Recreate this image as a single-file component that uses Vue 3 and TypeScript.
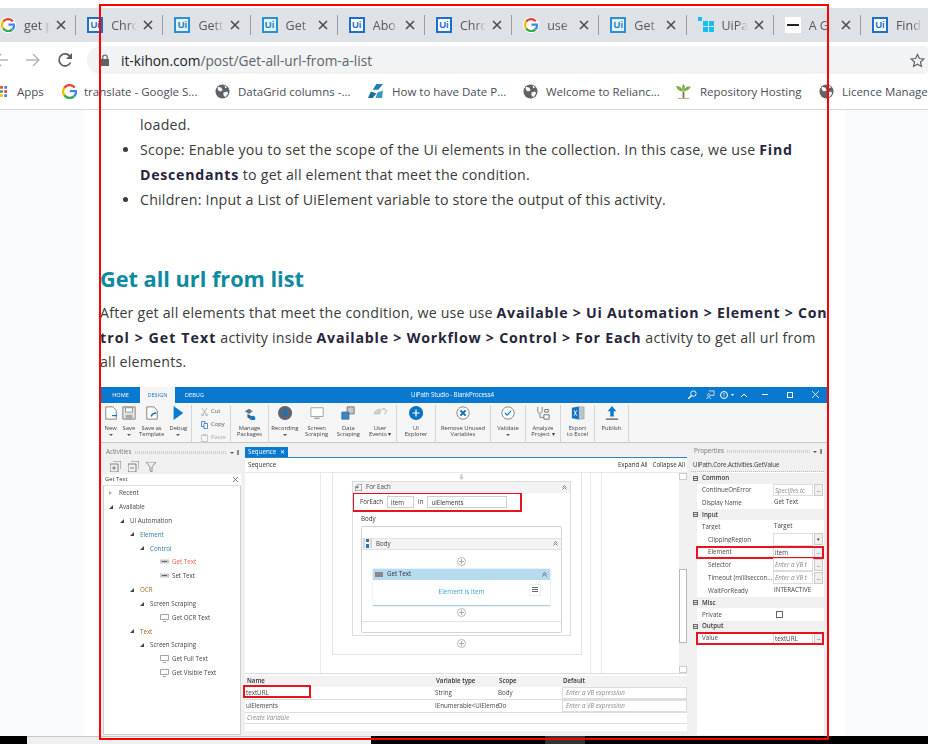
<script setup lang="ts">
interface Shape {
  d: string
  fill?: string
  stroke?: string
  w?: number
}

interface RibbonItem {
  lines: string[]
  icon: string
  caret?: boolean
}

interface PropRow {
  name: string
  value?: string
  kind: 'section' | 'plain' | 'hint' | 'input' | 'combo' | 'flag'
  indent?: boolean
  more?: boolean
}

const icons: Record<string, Shape[]> = {
  newdoc: [
    { d: 'M2 1h8l4 4v10H2z', fill: '#fff', stroke: '#777', w: 1 },
    { d: 'M9 11h6', stroke: '#0a7ad1', w: 1.4 }
  ],
  save: [
    { d: 'M1 1h14v14H1z', fill: '#e8e8e8', stroke: '#777', w: 1 },
    { d: 'M4 2h8v5H4z', fill: '#fff', stroke: '#888', w: 1 },
    { d: 'M4 10h8v5H4z', fill: '#aaa' }
  ],
  template: [
    { d: 'M2 1h8l4 4v10H2z', fill: '#fff', stroke: '#777', w: 1 },
    { d: 'M7 12c1-3 3-4 6-4', stroke: '#1a6fb8', w: 1.6 }
  ],
  debug: [{ d: 'M3 0l11 8-11 8z', fill: '#0a7ad1' }],
  manage: [
    { d: 'M2 6l5-3 4 3-4 3z', fill: '#5f7486' },
    { d: 'M5 9l4 2v4l-4-2z', fill: '#44586a' },
    { d: 'M11 11a3 3 0 1 0 .1 0', fill: '#0a7ad1' }
  ],
  record: [
    { d: 'M8 0a8 8 0 1 0 .1 0z', fill: '#5c6670' },
    { d: 'M8 5a3 3 0 1 0 .1 0z', fill: '#1672c8' }
  ],
  screen: [
    { d: 'M1 2h14v10H1z', fill: '#fff', stroke: '#9a9a9a', w: 1 },
    { d: 'M5 14h6', stroke: '#888', w: 1.2 }
  ],
  data: [
    { d: 'M7 1h8v8H7z', fill: '#c7c7c7', stroke: '#6f6f6f', w: 1 },
    { d: 'M1 7h8v8H1z', fill: '#3f85c4', stroke: '#2a6ca8', w: 1 }
  ],
  events: [
    { d: 'M1 9c1-4 5-6 8-5l-1 5z', fill: '#d0d0d0', stroke: '#bbb', w: 0.8 },
    { d: 'M10 4a3 3 0 1 1 3 5', stroke: '#aaa', w: 1.1 }
  ],
  explorer: [
    { d: 'M8 0a8 8 0 1 0 .1 0z', fill: '#0a74c4' },
    { d: 'M4 8h8M8 4v8', stroke: '#fff', w: 1.4 }
  ],
  remove: [
    { d: 'M8 1a7 7 0 1 0 .1 0z', fill: '#fff', stroke: '#777', w: 1 },
    { d: 'M5 5l6 6M11 5l-6 6', stroke: '#0a74c4', w: 2.4 }
  ],
  validate: [
    { d: 'M8 1a7 7 0 1 0 .1 0z', fill: '#fff', stroke: '#777', w: 1 },
    { d: 'M4.5 8l2.5 2.5 4.5-5', stroke: '#0a7ad1', w: 1.3 }
  ],
  analyze: [
    { d: 'M2 1v5c0 3 5 3 5 0V1M4.5 9v4h4', stroke: '#777', w: 1 },
    { d: 'M10 4h4v3h-4zM9 10h6v5H9z', fill: '#fff', stroke: '#666', w: 1 }
  ],
  excel: [
    { d: 'M8 1h7v14H8z', fill: '#b9c4cc', stroke: '#8a97a0', w: 0.6 },
    { d: 'M1 2l8-1.500v15L1 14z', fill: '#1173c4' },
    { d: 'M3.500 5l3 6M6.500 5l-3 6', stroke: '#fff', w: 1 }
  ],
  publish: [
    { d: 'M8 0l5 6h-3v6H6V6H3z', fill: '#0a7ad1' },
    { d: 'M1 15h14', stroke: '#555', w: 1.4 }
  ]
}

const tabs = [
  { icon: 'g', label: 'get p' },
  { icon: 'ui', label: 'Chro' },
  { icon: 'ui-light', label: 'Gett' },
  { icon: 'ui-light', label: 'Get' },
  { icon: 'ui', label: 'Abo' },
  { icon: 'ui', label: 'Chro' },
  { icon: 'g', label: 'use' },
  { icon: 'ui-light', label: 'Get' },
  { icon: 'squares', label: 'UiPa' },
  { icon: 'bar', label: 'A G' },
  { icon: 'ui', label: 'Find' }
]

const bookmarks = [
  { icon: 'grid', label: 'Apps' },
  { icon: 'g', label: 'translate - Google S...' },
  { icon: 'globe', label: 'DataGrid columns -...' },
  { icon: 'wing', label: 'How to have Date P...' },
  { icon: 'globe', label: 'Welcome to Relianc...' },
  { icon: 'tree', label: 'Repository Hosting' },
  { icon: 'globe', label: 'Licence Manage' }
]

const ribbonLeft: RibbonItem[] = [
  { lines: ['New'], icon: 'newdoc', caret: true },
  { lines: ['Save'], icon: 'save', caret: true },
  { lines: ['Save as', 'Template'], icon: 'template' },
  { lines: ['Debug'], icon: 'debug', caret: true }
]

const ribbonGroups: RibbonItem[][] = [
  [{ lines: ['Manage', 'Packages'], icon: 'manage' }],
  [
    { lines: ['Recording'], icon: 'record', caret: true },
    { lines: ['Screen', 'Scraping'], icon: 'screen' },
    { lines: ['Data', 'Scraping'], icon: 'data' },
    { lines: ['User', 'Events ▾'], icon: 'events' }
  ],
  [{ lines: ['UI', 'Explorer'], icon: 'explorer' }],
  [{ lines: ['Remove Unused', 'Variables'], icon: 'remove' }],
  [{ lines: ['Validate'], icon: 'validate', caret: true }],
  [{ lines: ['Analyze', 'Project ▾'], icon: 'analyze' }],
  [{ lines: ['Export', 'to Excel'], icon: 'excel' }],
  [{ lines: ['Publish'], icon: 'publish' }]
]

const tree = [
  { label: 'Recent', level: 0, tone: '', open: false },
  { label: 'Available', level: 0, tone: '', open: true },
  { label: 'UI Automation', level: 1, tone: '', open: true },
  { label: 'Element', level: 2, tone: 'blue', open: true },
  { label: 'Control', level: 3, tone: 'blue', open: true },
  { label: 'Get Text', level: 4, tone: 'hit', icon: 'box' },
  { label: 'Set Text', level: 4, tone: '', icon: 'box' },
  { label: 'OCR', level: 2, tone: 'amber', open: true },
  { label: 'Screen Scraping', level: 3, tone: '', open: true },
  { label: 'Get OCR Text', level: 4, tone: '', icon: 'monitor' },
  { label: 'Text', level: 2, tone: 'amber', open: true },
  { label: 'Screen Scraping', level: 3, tone: '', open: true },
  { label: 'Get Full Text', level: 4, tone: '', icon: 'monitor' },
  { label: 'Get Visible Text', level: 4, tone: '', icon: 'monitor' }
]

const props: PropRow[] = [
  { name: 'Common', kind: 'section' },
  { name: 'ContinueOnError', value: 'Specifies tc', kind: 'hint', more: true },
  { name: 'Display Name', value: 'Get Text', kind: 'plain' },
  { name: 'Input', kind: 'section' },
  { name: 'Target', value: 'Target', kind: 'plain' },
  { name: 'ClippingRegion', kind: 'combo', indent: true },
  { name: 'Element', value: 'item', kind: 'input', indent: true, more: true },
  { name: 'Selector', value: 'Enter a VB t', kind: 'hint', indent: true, more: true },
  { name: 'Timeout (milliseccon...', value: 'Enter a VB t', kind: 'hint', indent: true, more: true },
  { name: 'WaitForReady', value: 'INTERACTIVE', kind: 'plain', indent: true },
  { name: 'Misc', kind: 'section' },
  { name: 'Private', kind: 'flag' },
  { name: 'Output', kind: 'section' },
  { name: 'Value', value: 'textURL', kind: 'input', more: true }
]

const variables = [
  { name: 'textURL', type: 'String', scope: 'Body' },
  { name: 'uiElements', type: 'IEnumerable<UiEleme', scope: 'Do' }
]
</script>

<template>
  <div class="page">
    <div class="tabstrip">
      <div v-for="(tab, i) in tabs" :key="i" class="tab">
        <span v-if="tab.icon === 'ui' || tab.icon === 'ui-light'" class="ui-icon" :class="{ light: tab.icon === 'ui-light' }">Ui</span>
        <span v-else-if="tab.icon === 'g'" class="g-round">
          <svg width="14" height="14" viewBox="0 0 16 16" fill="none">
            <path d="M13.500 3.800A7 7 0 0 0 2.500 4" stroke="#ea4335" stroke-width="2.600" />
            <path d="M2.500 4a7 7 0 0 0 0 8" stroke="#fbbc05" stroke-width="2.600" />
            <path d="M2.500 12a7 7 0 0 0 10.500 1" stroke="#34a853" stroke-width="2.600" />
            <path d="M13 13a7 7 0 0 0 2-5.400H8.500" stroke="#4285f4" stroke-width="2.600" />
          </svg>
        </span>
        <svg v-else-if="tab.icon === 'squares'" class="favicon" viewBox="0 0 16 16">
          <path d="M0 0h4v4H0zM5 4h5v5H5zM11 4h5v5h-5zM5 10h5v5H5zM11 10h5v5h-5z" fill="#12c2ee" />
        </svg>
        <svg v-else class="favicon" viewBox="0 0 16 16">
          <path d="M0 0h16v16H0z" fill="#fff" />
          <path d="M2 7h12v2H2z" fill="#222" />
        </svg>
        <span class="tab-label">{{ tab.label }}</span>
        <svg class="tab-close" width="10" height="10" viewBox="0 0 10 10">
          <path d="M1 1l8 8M9 1l-8 8" stroke="#45484c" stroke-width="1.500" />
        </svg>
      </div>
    </div>

    <div class="toolbar">
      <svg class="nav back" width="14" height="14" viewBox="0 0 14 14" fill="none">
        <path d="M14 7H1M7 1L1 7l6 6" stroke="#b4b6b9" stroke-width="1.500" />
      </svg>
      <svg class="nav forward" width="14" height="14" viewBox="0 0 14 14" fill="none">
        <path d="M0 7h13M7 1l6 6-6 6" stroke="#b4b6b9" stroke-width="1.500" />
      </svg>
      <svg class="nav reload" width="16" height="16" viewBox="0 0 16 16" fill="none">
        <path d="M13.500 10.500A6 6 0 1 1 13 4.500" stroke="#5a5d61" stroke-width="1.700" />
        <path d="M15 1v6H9z" fill="#5a5d61" />
      </svg>
      <div class="omnibox">
        <svg width="10" height="12" viewBox="0 0 10 12">
          <path d="M1 5h8v7H1z" fill="#5f6368" />
          <path d="M2.800 5V3.200a2.200 2.200 0 0 1 4.400 0V5" fill="none" stroke="#5f6368" stroke-width="1.200" />
        </svg>
        <span class="url"><span class="url-host">it-kihon.com</span>/post/Get-all-url-from-a-list</span>
        <svg class="star" width="15" height="15" viewBox="0 0 16 16">
          <path d="M8 1.500l2 4.400 4.800.5-3.600 3.200 1 4.700L8 11.900l-4.200 2.400 1-4.700L1.200 6.400 6 5.900z" fill="none" stroke="#5f6368" stroke-width="1.300" />
        </svg>
      </div>
    </div>

    <div class="bookmarks">
      <div v-for="mark in bookmarks" :key="mark.label" class="bookmark" :class="mark.icon">
        <svg v-if="mark.icon === 'grid'" class="mark-icon" viewBox="0 0 16 16">
          <path d="M0 0h4v4H0z" fill="#ea4335" /><path d="M6 0h4v4H6z" fill="#ea4335" /><path d="M12 0h4v4h-4z" fill="#4285f4" />
          <path d="M0 6h4v4H0z" fill="#fbbc05" /><path d="M6 6h4v4H6z" fill="#34a853" /><path d="M12 6h4v4h-4z" fill="#ea4335" />
          <path d="M0 12h4v4H0z" fill="#fbbc05" /><path d="M6 12h4v4H6z" fill="#fbbc05" /><path d="M12 12h4v4h-4z" fill="#4285f4" />
        </svg>
        <svg v-else-if="mark.icon === 'g'" class="mark-icon" viewBox="0 0 16 16" fill="none">
          <path d="M13.500 3.800A7 7 0 0 0 2.500 4" stroke="#ea4335" stroke-width="2.600" />
          <path d="M2.500 4a7 7 0 0 0 0 8" stroke="#fbbc05" stroke-width="2.600" />
          <path d="M2.500 12a7 7 0 0 0 10.500 1" stroke="#34a853" stroke-width="2.600" />
          <path d="M13 13a7 7 0 0 0 2-5.400H8.500" stroke="#4285f4" stroke-width="2.600" />
        </svg>
        <svg v-else-if="mark.icon === 'globe'" class="mark-icon" viewBox="0 0 16 16">
          <circle cx="8" cy="8" r="7.500" fill="#5f6368" />
          <path d="M3 3l4 1 1 3-3 1-2-2zM9 9l4-1 1 2-3 4-2-2zM10 1.500l3 2-2 1z" fill="#fff" />
        </svg>
        <svg v-else-if="mark.icon === 'wing'" class="mark-icon" viewBox="0 0 16 16">
          <path d="M9 0h7l-5 6H5z" fill="#1f7fb5" />
          <path d="M0 15l3-7 6 2-4 5z" fill="#1a6d9e" />
          <path d="M8 15l2-6 6-2-1 8z" fill="#2f9ccc" />
        </svg>
        <svg v-else class="mark-icon" viewBox="0 0 16 16">
          <path d="M7 8V15h2V8z" fill="#8d7350" />
          <path d="M8 8C4 8 1 6 0 2c4 0 7 2 8 6zM8 8c3 0 6-2 8-5-4-1-7 1-8 5zM8 7C6 5 6 2 8 0c2 2 2 5 0 7z" fill="#7fb048" />
          <path d="M2 15h12v1H2z" fill="#b9a98b" />
        </svg>
        <span>{{ mark.label }}</span>
      </div>
    </div>

    <main class="content">
      <article class="article">
        <ul class="bullets">
          <li class="no-dot">loaded.</li>
          <li>Scope: Enable you to set the scope of the Ui elements in the collection. In this case, we use <b>Find<br />Descendants</b> to get all element that meet the condition.</li>
          <li>Children: Input a List of UiElement variable to store the output of this activity.</li>
        </ul>

        <h2>Get all url from list</h2>
        <p class="intro">
          After get all elements that meet the condition, we use use <b>Available &gt; Ui Automation &gt; Element &gt; Con<br /><span class="wide">trol &gt; Get Text</span></b> activity inside <b class="wider">Available &gt; Workflow &gt; Control &gt; For Each</b> activity to get all url from<br />all elements.
        </p>

        <section class="studio">
          <header class="titlebar">
            <span class="ribbon-tab">HOME</span>
            <span class="ribbon-tab active">DESIGN</span>
            <span class="ribbon-tab">DEBUG</span>
            <span class="app-title">UiPath Studio - BlankProcess4</span>
            <div class="win-icons">
              <svg width="9" height="9" viewBox="0 0 10 10" fill="none"><circle cx="6" cy="4" r="3" stroke="#fff" /><path d="M4 6L0 10" stroke="#fff" stroke-width="1.500" /></svg>
              <svg width="9" height="9" viewBox="0 0 10 10" fill="none"><path d="M3 1h6v5H5M3 4a1.500 1.500 0 1 0 .1 0M1 10c0-3 4-3 4 0" stroke="#fff" stroke-width=".8" /></svg>
              <span class="help">?</span>
              <svg width="3" height="2" viewBox="0 0 6 4"><path d="M0 0h6L3 4z" fill="#fff" /></svg>
              <svg width="6" height="4" viewBox="0 0 6 4" fill="none"><path d="M0 4l3-3 3 3" stroke="#fff" /></svg>
              <span class="win-min"></span>
              <span class="win-max"></span>
              <svg width="7" height="7" viewBox="0 0 7 7" fill="none"><path d="M0 0l7 7M7 0L0 7" stroke="#fff" stroke-width=".8" /></svg>
            </div>
          </header>

          <div class="ribbon">
            <div class="rib-group first">
              <div v-for="item in ribbonLeft" :key="item.lines[0]" class="rib-item">
                <svg class="rib-icon" viewBox="0 0 16 16" fill="none">
                  <path v-for="(s, k) in icons[item.icon]" :key="k" :d="s.d" :fill="s.fill ?? 'none'" :stroke="s.stroke" :stroke-width="s.w" />
                </svg>
                <span v-for="line in item.lines" :key="line">{{ line }}</span>
                <i v-if="item.caret" class="caret"></i>
              </div>
            </div>
            <div class="rib-group clip">
              <span>
                <svg class="clip-icon" viewBox="0 0 7 8" fill="none"><path d="M1 0l4 6M6 0L2 6" stroke="#999" stroke-width=".7" /><circle cx="1.500" cy="7" r="1" stroke="#999" stroke-width=".6" /><circle cx="5.500" cy="7" r="1" stroke="#999" stroke-width=".6" /></svg>
                Cut
              </span>
              <span>
                <svg class="clip-icon" viewBox="0 0 7 8" fill="none"><path d="M.5.500h3.500v5H.5z" stroke="#2a75b8" stroke-width=".8" /><path d="M3 2.500h3.500v5H3z" fill="#fff" stroke="#2a75b8" stroke-width=".8" /></svg>
                Copy
              </span>
              <span class="muted">
                <svg class="clip-icon" viewBox="0 0 7 8" fill="none"><path d="M.5 1h6v6.500h-6zM2.500.500h2v1h-2z" stroke="#b5b5b5" stroke-width=".7" /></svg>
                Paste
              </span>
            </div>
            <div v-for="(group, g) in ribbonGroups" :key="g" class="rib-group">
              <div v-for="item in group" :key="item.lines[0]" class="rib-item">
                <svg class="rib-icon" viewBox="0 0 16 16" fill="none">
                  <path v-for="(s, k) in icons[item.icon]" :key="k" :d="s.d" :fill="s.fill ?? 'none'" :stroke="s.stroke" :stroke-width="s.w" />
                </svg>
                <span v-for="line in item.lines" :key="line">{{ line }}</span>
                <i v-if="item.caret" class="caret"></i>
              </div>
            </div>
          </div>

          <div class="workspace">
            <aside class="activities">
              <div class="pane-title"><span>Activities</span><i class="grip"></i><i class="caret small"></i><i class="pin"></i></div>
              <div class="act-tools">
                <svg width="11" height="11" viewBox="0 0 11 11" fill="none"><path d="M3 0h8v8M0 3h8v8H0zM2 7h4M4 5v4" stroke="#666" stroke-width=".8" /></svg>
                <svg width="11" height="11" viewBox="0 0 11 11" fill="none"><path d="M3 0h8v8M0 3h8v8H0zM2 7h4" stroke="#666" stroke-width=".8" /></svg>
                <svg width="10" height="10" viewBox="0 0 10 10" fill="none"><path d="M0 0h10L6 5v5L4 9V5z" stroke="#777" stroke-width=".8" /></svg>
              </div>
              <div class="act-search">
                <span>Get Text</span>
                <svg width="5" height="5" viewBox="0 0 5 5" fill="none"><path d="M0 0l5 5M5 0L0 5" stroke="#555" stroke-width=".8" /></svg>
              </div>
              <div class="act-tree">
                <div v-for="(row, r) in tree" :key="r" class="tree-row" :class="[`lv${row.level}`, row.tone]">
                  <i v-if="row.icon === undefined" class="arrow" :class="{ closed: !row.open }"></i>
                  <svg v-else-if="row.icon === 'box'" class="leaf" viewBox="0 0 9 7"><path d="M0 1h9v4H0z" fill="#c9c9c9" /><path d="M2 3h5" stroke="#666" /></svg>
                  <svg v-else class="leaf" viewBox="0 0 9 8" fill="none"><path d="M.5.500h8v5h-8zM3 7.500h3" stroke="#8d8d8d" stroke-width=".8" /></svg>
                  <span>{{ row.label }}</span>
                </div>
              </div>
            </aside>

            <div class="center">
              <div class="doc-tabs"><span class="doc-tab">Sequence <i>✕</i></span></div>
              <div class="crumbs">
                <span>Sequence</span>
                <span class="crumb-links"><span>Expand All</span><span>Collapse All</span></span>
              </div>
              <div class="canvas">
                <div class="seq-outer">
                  <svg class="drop" width="5" height="6" viewBox="0 0 5 6"><path d="M1.500 0h2v3H5L2.500 6 0 3h1.500z" fill="#ccc" /></svg>
                  <div class="foreach">
                    <div class="act-head">
                      <svg width="7" height="7" viewBox="0 0 7 7" fill="none"><path d="M2 0h5v7H0V3h4M2 1.500v3" stroke="#555" stroke-width=".8" /></svg>
                      <span>For Each</span>
                      <svg class="chev" width="5" height="5" viewBox="0 0 5 5" fill="none"><path d="M.5 2.500L2.500.5l2 2M.5 4.500l2-2 2 2" stroke="#555" stroke-width=".7" /></svg>
                    </div>
                    <div class="foreach-args">
                      <span>ForEach</span><span class="box item">item</span><span>in</span><span class="box list">uiElements</span>
                    </div>
                    <div class="body-label">Body</div>
                    <div class="body-box">
                      <div class="act-head seq-head">
                        <svg width="9" height="9" viewBox="0 0 9 9"><path d="M3 0h3v3H3zM3 5h3v4H3z" fill="#2a75b8" /><path d="M1 0v9M8 0v9" stroke="#999" stroke-width=".6" /></svg>
                        <span>Body</span>
                        <svg class="chev" width="5" height="5" viewBox="0 0 5 5" fill="none"><path d="M.5 2.500L2.500.5l2 2M.5 4.500l2-2 2 2" stroke="#555" stroke-width=".7" /></svg>
                      </div>
                      <div class="body-main">
                        <i class="plus"></i>
                        <div class="gettext">
                          <div class="gettext-head">
                            <svg width="8" height="5" viewBox="0 0 8 5"><path d="M0 0h8v5H0z" fill="#888" /></svg>
                            <span>Get Text</span>
                            <svg class="chev" width="5" height="5" viewBox="0 0 5 5" fill="none"><path d="M.5 2.500L2.500.5l2 2M.5 4.500l2-2 2 2" stroke="#444" stroke-width=".7" /></svg>
                          </div>
                          <div class="gettext-body">
                            <span>Element is item</span>
                            <i class="menu-btn"></i>
                          </div>
                        </div>
                        <i class="plus"></i>
                      </div>
                    </div>
                  </div>
                  <i class="plus"></i>
                </div>
                <div class="scrollbar"><i class="thumb"></i></div>
              </div>
              <div class="variables">
                <div class="var-row var-head"><span>Name</span><span>Variable type</span><span>Scope</span><span>Default</span></div>
                <div v-for="v in variables" :key="v.name" class="var-row">
                  <span>{{ v.name }}</span><span>{{ v.type }}</span><span>{{ v.scope }}</span><span class="var-default">Enter a VB expression</span>
                </div>
                <div class="var-create">Create Variable</div>
                <div class="var-foot"></div>
                <div class="red-mark name-mark"></div>
              </div>
            </div>

            <aside class="properties">
              <div class="pane-title"><span>Properties</span><i class="grip"></i><i class="caret small"></i><i class="pin"></i></div>
              <div class="prop-type">UiPath.Core.Activities.GetValue</div>
              <div class="prop-list">
                <template v-for="row in props" :key="row.name">
                  <div v-if="row.kind === 'section'" class="prop-section"><i class="square-minus"></i>{{ row.name }}</div>
                  <div v-else class="prop-row" :class="{ indent: row.indent, marked: row.name === 'Element' || row.name === 'Value' }">
                    <span class="prop-name">{{ row.name }}</span>
                    <span class="prop-value" :class="row.kind">
                      <i v-if="row.kind === 'flag'" class="tick"></i>{{ row.value }}
                    </span>
                    <span v-if="row.more" class="prop-more">...</span>
                    <span v-else-if="row.kind === 'combo'" class="prop-more">▾</span>
                  </div>
                </template>
              </div>
            </aside>
          </div>
        </section>
      </article>
    </main>

    <footer class="taskbar">
      <span class="dark left"></span>
      <span class="light"></span>
      <span class="dark mid"></span>
      <span class="hover"></span>
      <span class="dark end"></span>
    </footer>

    <div class="red-frame"></div>
  </div>
</template>

<style scoped>
.page {
  position: relative;
  width: 928px;
  height: 744px;
  overflow: hidden;
  background: #fff;
  display: flex;
  flex-direction: column;
  font-family: "Open Sans", "Liberation Sans", sans-serif;
}

.tabstrip {
  margin-top: 8px;
  height: 34px;
  background: #dee1e6;
  display: flex;
  flex: none;
  overflow: hidden;
}

.tab {
  width: 87.2px;
  flex: none;
  display: flex;
  align-items: center;
  padding-left: 11px;
  box-sizing: border-box;
  position: relative;
  transform: translateX(-11px);
}

.tab::after {
  content: "";
  position: absolute;
  right: 0;
  top: 7px;
  height: 20px;
  width: 1px;
  background: #9a9da1;
}

.ui-icon {
  width: 16px;
  height: 16px;
  box-sizing: border-box;
  border: 2px solid #1b6fd1;
  color: #1b6fd1;
  background: #fff;
  font: 700 9.5px/12px "Liberation Sans", sans-serif;
  text-align: center;
  flex: none;
}

.ui-icon.light {
  border-color: #2b91d2;
  color: #2481bd;
  background: #e4f2fa;
}

.g-round {
  width: 16px;
  height: 16px;
  border-radius: 50%;
  background: #fff;
  display: flex;
  align-items: center;
  justify-content: center;
  flex: none;
}

.favicon {
  width: 16px;
  height: 16px;
  flex: none;
}

.tab-label {
  margin-left: 8px;
  width: 26px;
  overflow: hidden;
  white-space: nowrap;
  font-size: 12.5px;
  color: #55585c;
  -webkit-mask-image: linear-gradient(90deg, #000 60%, transparent);
  mask-image: linear-gradient(90deg, #000 60%, transparent);
}

.tab-close {
  margin-left: 6px;
  flex: none;
}

.toolbar {
  height: 32px;
  flex: none;
  display: flex;
  align-items: flex-start;
  position: relative;
  padding-top: 4px;
  box-sizing: border-box;
}

.nav {
  position: absolute;
  top: 11px;
}

.back { left: -6px; }
.forward { left: 26px; }
.reload { left: 57px; top: 10px; }

.omnibox {
  margin-left: 87px;
  width: 841px;
  height: 28px;
  box-sizing: border-box;
  background: #f1f3f4;
  border-radius: 14px 4px 4px 14px;
  display: flex;
  align-items: center;
  padding-left: 13px;
  padding-right: 3px;
}

.url {
  margin-left: 11px;
  font-size: 13.7px;
  color: #5f6368;
  flex: 1;
}

.url-host {
  color: #202124;
}

.bookmarks {
  height: 36px;
  flex: none;
  box-sizing: border-box;
  border-bottom: 1px solid #d5d7da;
  display: grid;
  grid-template-columns: 62px 153px 153px 155px 152px 144px 120px;
  align-items: center;
  font-size: 11.5px;
  color: #4b4e58;
  overflow: hidden;
}

.bookmark {
  display: flex;
  align-items: center;
  white-space: nowrap;
}

.mark-icon {
  width: 15px;
  height: 15px;
  margin-right: 8px;
  flex: none;
}

.bookmark.grid .mark-icon {
  width: 11px;
  height: 11px;
  margin-left: -4px;
  margin-right: 10px;
}

.bookmark.g .mark-icon { margin-right: 7px; }
.bookmark.wing .mark-icon { margin-right: 9px; }
.bookmark.tree .mark-icon { margin-right: 8px; width: 17px; }

.content {
  flex: 1;
  min-height: 0;
  background: #f8fbfe;
  padding: 0 83px 0 84px;
  overflow: hidden;
}

.article {
  background: #fff;
  height: 100%;
  padding: 2px 0 0 16px;
  color: #3a3a3a;
  font-size: 14.2px;
  letter-spacing: .21px;
  overflow: hidden;
}

.bullets {
  margin: 0;
  padding: 0 0 0 40px;
  list-style: disc;
  line-height: 25px;
  white-space: nowrap;
}

.no-dot {
  list-style: none;
}

b {
  font-weight: 700;
  letter-spacing: .72px;
  color: #26263c;
}

b .wide {
  letter-spacing: 1.05px;
}

b.wider {
  letter-spacing: .78px;
}

h2 {
  margin: 51px 0 0;
  font-size: 21.7px;
  line-height: 32px;
  letter-spacing: 0;
  color: #0d8aa3;
  font-weight: 700;
}

.intro {
  margin: 6px 0 0;
  line-height: 24.5px;
  white-space: nowrap;
}

/* studio screenshot pasted into the post */
.studio {
  margin: 12px 0 0 1px;
  width: 726px;
  height: 352px;
  display: flex;
  flex-direction: column;
  background: #f0f0f0;
  color: #333;
  font-size: 6.2px;
  letter-spacing: 0;
  line-height: 1.2;
  filter: blur(.3px);
  overflow: hidden;
}

.titlebar {
  height: 16px;
  flex: none;
  background: #0879cf;
  color: #fff;
  display: flex;
  align-items: center;
  position: relative;
}

.ribbon-tab {
  width: 39px;
  text-align: center;
  height: 100%;
  line-height: 17px;
  font-size: 5.6px;
}

.ribbon-tab.active {
  width: 35px;
  background: #f5f5f5;
  color: #1f78c4;
}

.app-title {
  position: absolute;
  left: 310px;
  line-height: 16px;
  letter-spacing: -.12px;
}

.win-icons {
  margin-left: auto;
  display: grid;
  grid-template-columns: 18px 18px 10px 6px 18px 24px 26px 24px;
  align-items: center;
  justify-items: center;
}

.help {
  width: 8px;
  height: 8px;
  border: 1px solid #fff;
  border-radius: 50%;
  box-sizing: border-box;
  font-size: 5.5px;
  line-height: 6px;
  text-align: center;
}

.win-min {
  width: 6px;
  height: 1px;
  background: #fff;
}

.win-max {
  width: 6px;
  height: 6px;
  border: 1px solid #fff;
  box-sizing: border-box;
}

.ribbon {
  height: 39px;
  flex: none;
  background: #f5f5f5;
  border-bottom: 1px solid #c8c8c8;
  display: grid;
  grid-template-columns: 91px 39px 38px 128px 39px 55px 35px 35px 34px 34px;
}

.rib-group {
  display: flex;
  justify-content: space-around;
  border-right: 1px solid #d4d4d4;
  margin: 2px 0 3px;
}

.rib-group.first {
  display: grid;
  grid-template-columns: 19px 17px 28px 25px;
}

.rib-item {
  display: flex;
  flex-direction: column;
  align-items: center;
  min-width: 0;
  flex: 1;
  white-space: nowrap;
  color: #3d3d3d;
  line-height: 6px;
  font-size: 5.8px;
}

.rib-icon {
  width: 14px;
  height: 14px;
  margin: 1px 0 5px;
  flex: none;
}

.caret {
  width: 0;
  height: 0;
  margin-top: 3px;
  border: 2px solid transparent;
  border-top-color: #555;
  border-bottom: 0;
}

.caret.small {
  margin-top: 1px;
}

.clip {
  flex-direction: column;
  justify-content: flex-start;
  gap: 5px;
  padding: 3px 0 0 9px;
  font-size: 5.8px;
  color: #555;
}

.clip span {
  display: flex;
  align-items: center;
  gap: 3px;
}

.clip .muted {
  color: #aaa;
}

.clip-icon {
  width: 7px;
  height: 8px;
  display: block;
}

.workspace {
  flex: 1;
  min-height: 0;
  display: flex;
  padding: 0 3px 4px 2px;
  gap: 4px;
}

.pane-title {
  height: 17px;
  display: flex;
  align-items: center;
  gap: 3px;
  color: #777;
  padding: 2px 2px 0 3px;
  box-sizing: border-box;
  flex: none;
}

.properties .pane-title {
  height: 15px;
}

.grip {
  flex: 1;
  height: 3px;
  background: repeating-linear-gradient(90deg, #cfcfcf 0 1px, transparent 1px 2px);
}

.pin {
  width: 2px;
  height: 5px;
  border: 1px solid #888;
  box-sizing: border-box;
}

.activities {
  width: 138px;
  flex: none;
  display: flex;
  flex-direction: column;
}

.act-tools {
  height: 14px;
  flex: none;
  display: flex;
  align-items: center;
  gap: 7px;
  padding-left: 7px;
}

.act-search {
  height: 12px;
  flex: none;
  background: #fff;
  display: flex;
  justify-content: space-between;
  align-items: center;
  padding: 0 3px 0 2px;
  border-bottom: 1px solid #ddd;
  box-sizing: border-box;
  font-size: 5.8px;
}

.act-tree {
  flex: 1;
  background: #fff;
  border: 1px solid #d0d0d0;
  border-top: 0;
  padding-top: .5px;
  color: #444;
}

.tree-row {
  height: 13.85px;
  display: flex;
  align-items: center;
}

.lv0 { padding-left: 5px; }
.lv1 { padding-left: 16px; }
.lv2 { padding-left: 26px; }
.lv3 { padding-left: 36px; }
.lv4 { padding-left: 56px; }

.arrow {
  width: 0;
  height: 0;
  margin-right: 6px;
  border-style: solid;
  border-width: 0 0 4px 4px;
  border-color: transparent transparent #444 transparent;
  flex: none;
}

.arrow.closed {
  border-width: 2.500px 0 2.500px 3px;
  border-color: transparent transparent transparent #aaa;
  margin-right: 7px;
}

.leaf {
  width: 9px;
  height: 8px;
  margin-right: 3px;
  flex: none;
}

.tree-row.blue { color: #2c7fa8; }
.tree-row.amber { color: #a06a20; }
.tree-row.hit { color: #f0604a; }

.center {
  flex: 1;
  min-width: 0;
  display: flex;
  flex-direction: column;
  background: #fff;
  position: relative;
}

.doc-tabs {
  height: 15px;
  flex: none;
  background: #f0f0f0;
  display: flex;
  align-items: flex-end;
  border-bottom: 1px solid #2c86cc;
  box-sizing: border-box;
  padding-top: 4px;
}

.doc-tab {
  background: #0879cf;
  color: #fff;
  height: 10px;
  line-height: 10px;
  padding-left: 3px;
  width: 43px;
  box-sizing: border-box;
  font-size: 6.2px;
  white-space: nowrap;
}

.doc-tab i {
  font-style: normal;
  margin-left: 2px;
}

.crumbs {
  height: 15px;
  flex: none;
  display: flex;
  justify-content: space-between;
  align-items: center;
  padding: 0 2px 0 3px;
  border-bottom: 1px solid #e8e8e8;
  box-sizing: border-box;
  color: #333;
}

.crumb-links {
  display: flex;
  gap: 5px;
  letter-spacing: -.05px;
}

.canvas {
  height: 200px;
  flex: none;
  display: flex;
  position: relative;
  background: linear-gradient(#e9e9e9, #e9e9e9) 75px 0/1px 100% no-repeat, linear-gradient(#e9e9e9, #e9e9e9) 345px 0/1px 100% no-repeat, linear-gradient(#e9e9e9, #e9e9e9) 356px 0/1px 100% no-repeat;
}

.seq-outer {
  margin-left: 87px;
  width: 250px;
  height: 182px;
  box-sizing: border-box;
  border: 1px solid #e4e4e4;
  border-top: 0;
  padding-left: 9px;
  display: flex;
  flex-direction: column;
  align-items: center;
  background: #fff;
}

.drop {
  margin: 1px 0 1px;
  flex: none;
}

.foreach {
  width: 219px;
  height: 155.5px;
  flex: none;
  box-sizing: border-box;
  border: 1px solid #dcdcdc;
  display: flex;
  flex-direction: column;
}

.act-head {
  height: 11px;
  flex: none;
  background: #f3f3f3;
  display: flex;
  align-items: center;
  gap: 4px;
  padding-left: 2px;
  color: #444;
}

.chev {
  margin-left: auto;
  margin-right: 3px;
  flex: none;
}

.foreach-args {
  height: 19px;
  box-sizing: border-box;
  flex: none;
  display: flex;
  align-items: center;
  gap: 4px;
  padding-left: 6px;
  border: 1px solid #e5141e;
  border-width: 1px 2px 2px 1px;
  width: 169px;
}

.box {
  background: #fff;
  border: 1px solid #cfcfcf;
  height: 12px;
  line-height: 11px;
  padding-left: 3px;
  box-sizing: border-box;
}

.box.item { width: 27px; }
.box.list { width: 80px; }

.body-label {
  padding: 3px 0 0 8px;
  height: 12px;
  box-sizing: border-box;
  flex: none;
}

.body-box {
  margin: 2px 0 0 8px;
  width: 201px;
  height: 107px;
  flex: none;
  box-sizing: border-box;
  border: 1px solid #d4d4d4;
  border-radius: 2px;
  padding: 11px 0 10px;
  display: flex;
  flex-direction: column;
}

.seq-head {
  height: 12px;
  background: #f3f3f3;
  border-top: 1px solid #e0e0e0;
  border-bottom: 1px solid #e0e0e0;
  padding-left: 1px;
  box-sizing: border-box;
}

.body-main {
  flex: 1;
  border-bottom: 1px solid #e2e2e2;
  display: flex;
  flex-direction: column;
  align-items: center;
}

.plus {
  width: 7px;
  height: 7px;
  border: 1px solid #b5b5b5;
  border-radius: 50%;
  background:
    linear-gradient(#aaa, #aaa) center/5px 1px no-repeat,
    linear-gradient(#aaa, #aaa) center/1px 5px no-repeat;
  flex: none;
}

.body-main .plus:first-child {
  margin: 7px 0 3px;
}

.gettext {
  width: 177px;
  height: 36px;
  flex: none;
  border-bottom: 1px solid #a9cfe6;
  background: #fff;
  margin-bottom: 2px;
  display: flex;
  flex-direction: column;
  box-shadow: 0 0 0 .5px #d9e8f2;
}

.gettext-head {
  height: 11px;
  flex: none;
  background: #b6dbef;
  display: flex;
  align-items: center;
  gap: 4px;
  padding-left: 2px;
  color: #333;
}

.gettext-body {
  flex: 1;
  display: flex;
  align-items: center;
  justify-content: center;
  color: #3aa0d8;
  font-size: 6.4px;
  position: relative;
}

.menu-btn {
  position: absolute;
  right: 9px;
  top: 4px;
  width: 6px;
  height: 6px;
  padding: 2px;
  background: repeating-linear-gradient(#666 0 1px, #fff 1px 2px) content-box;
  border: 1px solid #eee;
}

.foreach + .plus {
  margin-top: 3px;
}

.scrollbar {
  position: absolute;
  right: 0;
  top: 0;
  bottom: 0;
  width: 8px;
  background: #f0f0f0;
}

.scrollbar::before,
.scrollbar::after {
  content: "";
  position: absolute;
  left: 0;
  width: 8px;
  height: 7px;
  box-sizing: border-box;
  background: #fff;
  border: 1px solid #ccc;
}

.scrollbar::before { top: 0; }
.scrollbar::after { bottom: 0; }

.thumb {
  position: absolute;
  left: 0;
  width: 8px;
  height: 74px;
  top: 96px;
  box-sizing: border-box;
  background: #fff;
  border: 1px solid #b8b8b8;
}

.variables {
  flex: 1;
  min-height: 0;
  background: #fff;
  border-top: 1px solid #ddd;
  padding-top: 2px;
  position: relative;
  display: flex;
  flex-direction: column;
}

.var-row {
  display: grid;
  grid-template-columns: 189px 63px 64px 1fr;
  height: 13px;
  flex: none;
  align-items: center;
  border-bottom: 1px solid #dedede;
  box-sizing: border-box;
  padding-left: 1px;
  color: #444;
  white-space: nowrap;
  overflow: hidden;
}

.var-head {
  height: 11px;
  background: #f2f2f2;
  color: #333;
  font-weight: 600;
  border-bottom: 0;
  padding-left: 2px;
}

.var-default {
  font-style: italic;
  color: #888;
  background: #fff;
  border: 1px solid #ddd;
  height: 100%;
  padding-left: 3px;
  line-height: 10px;
  box-sizing: border-box;
}

.var-create {
  height: 10px;
  flex: none;
  font-style: italic;
  color: #888;
  padding-left: 2px;
  line-height: 10px;
  border-bottom: 1px solid #dedede;
}

.var-foot {
  margin-top: auto;
  height: 4px;
  flex: none;
  background: #f0f0f0;
}

.red-mark {
  position: absolute;
  box-sizing: border-box;
  border: 2px solid #e5141e;
}

.name-mark {
  left: -2px;
  top: 11px;
  width: 68px;
  height: 13px;
}

.properties {
  width: 133px;
  flex: none;
  display: flex;
  flex-direction: column;
}

.prop-type {
  height: 14px;
  flex: none;
  line-height: 14px;
  padding-left: 2px;
  color: #333;
  border-bottom: 1px dotted #bbb;
  box-sizing: border-box;
  letter-spacing: -.1px;
}

.prop-list {
  flex: 1;
  background: linear-gradient(#f0f0f0, #f0f0f0) 0 0/6px 100% no-repeat, #fff;
  padding-top: 1px;
}

.prop-section {
  height: 11px;
  background: #f0f0f0;
  display: flex;
  align-items: center;
  gap: 4px;
  padding-left: 2px;
  font-weight: 600;
  color: #3a3a3a;
}

.square-minus {
  width: 5px;
  height: 5px;
  border: 1px solid #666;
  box-sizing: border-box;
  background: linear-gradient(#666, #666) center/3px 1px no-repeat;
}

.prop-row {
  height: 12.800px;
  display: flex;
  align-items: center;
  padding-left: 11px;
  position: relative;
  box-sizing: border-box;
}

.prop-row.indent {
  padding-left: 17px;
}

.prop-name {
  width: 65px;
  flex: none;
  white-space: nowrap;
  overflow: hidden;
  color: #484848;
}

.prop-row:not(.indent) .prop-name {
  width: 71px;
}

.prop-value {
  flex: 1;
  min-width: 0;
  height: 100%;
  line-height: 12px;
  white-space: nowrap;
  overflow: hidden;
  padding-left: 1px;
  color: #3d3d3d;
}

.prop-value.hint {
  font-style: italic;
  color: #888;
  border: 1px solid #ddd;
  box-sizing: border-box;
}

.prop-value.input,
.prop-value.combo {
  border: 1px solid #ddd;
  box-sizing: border-box;
}

.prop-more {
  width: 9px;
  height: 12px;
  margin: 0 1px;
  flex: none;
  border: 1px solid #ccc;
  background: #f0f0f0;
  box-sizing: border-box;
  text-align: center;
  line-height: 10px;
  font-size: 5px;
}

.tick {
  display: block;
  margin: 3px 0 0 2px;
  width: 7px;
  height: 7px;
  border: 1px solid #666;
  box-sizing: border-box;
}

.prop-row.marked::after {
  content: "";
  position: absolute;
  left: 5px;
  right: 0;
  top: 0;
  bottom: -1px;
  border: 2px solid #e5141e;
  pointer-events: none;
}

.taskbar {
  height: 8px;
  flex: none;
  display: flex;
}

.taskbar .dark { background: #000; }
.taskbar .left { width: 27px; }
.taskbar .light { width: 344px; background: #f0f0f0; border-top: 1px solid #c9c9c9; box-sizing: border-box; }
.taskbar .mid { width: 174px; }
.taskbar .hover { width: 40px; background: #333; }
.taskbar .end { flex: 1; }

.red-frame {
  position: absolute;
  left: 99px;
  top: 4px;
  width: 730px;
  height: 736px;
  box-sizing: border-box;
  border: 2px solid #f00;
  pointer-events: none;
}
</style>
